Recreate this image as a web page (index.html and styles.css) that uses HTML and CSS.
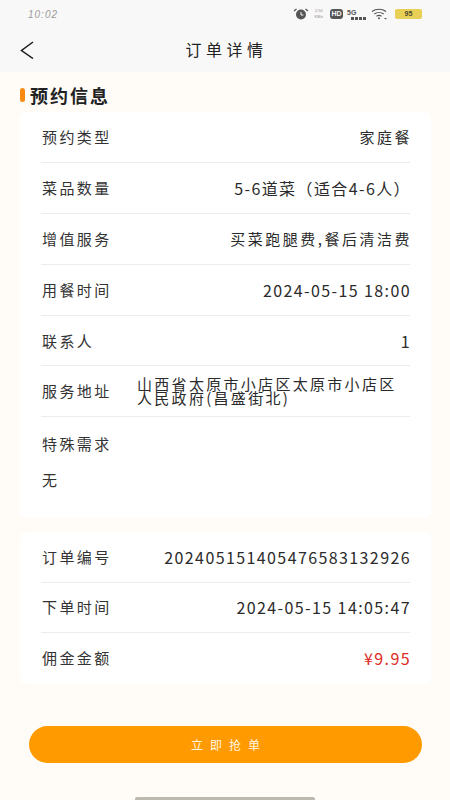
FILE: index.html
```html
<!DOCTYPE html>
<html lang="zh-CN">
<head>
<meta charset="utf-8">
<title>订单详情</title>
<link rel="stylesheet" href="styles.css">
</head>
<body>
<div class="page">
  <header class="top">
    <div class="status">
      <span class="time">10:02</span>
      <div class="status-icons">
        <svg class="ic-alarm" viewBox="0 0 16 12" width="16" height="12"><circle cx="8" cy="6.5" r="5" fill="#555"/><path d="M8 4v3h2.4" fill="none" stroke="#f8f8f8" stroke-width="1"/><path d="M1 3 3.5 1M15 3 12.500 1" stroke="#555" stroke-width="1.300"/></svg>
        <span class="speed"><span>2.50</span><span>KB/s</span></span>
        <span class="hd">HD</span>
        <span class="signal"><span class="sg">5G</span><span class="bars"><i></i><i></i><i></i><i></i></span></span>
        <svg class="ic-wifi" viewBox="0 0 16 12" width="16" height="12"><path d="M1 3.500C5 .5 11 .5 15 3.500M3.300 6C6 4 10 4 12.700 6M5.500 8.300C7 7.300 9 7.300 10.500 8.300" fill="none" stroke="#555" stroke-width="1.200"/><circle cx="8" cy="10.300" r="1" fill="#555"/><path d="M13 10h3l-1.500 1.500z" fill="#555"/></svg>
        <span class="battery">95</span>
      </div>
    </div>
    <div class="nav">
      <svg class="back" viewBox="0 0 14 18" width="14" height="18"><path d="M13 1 1.500 9.500 13 17.500" fill="none" stroke="#1a1a1a" stroke-width="1.500"/></svg>
      <h1 class="nav-title">订单详情</h1>
    </div>
  </header>

  <main class="content">
    <h2 class="section-title">预约信息</h2>
    <section class="card">
      <div class="row"><span class="label">预约类型</span><span class="value value-cjk">家庭餐</span></div>
      <div class="row"><span class="label">菜品数量</span><span class="value">5-6道菜（适合4-6人）</span></div>
      <div class="row"><span class="label">增值服务</span><span class="value value-cjk">买菜跑腿费,餐后清洁费</span></div>
      <div class="row"><span class="label">用餐时间</span><span class="value">2024-05-15 18:00</span></div>
      <div class="row"><span class="label">联系人</span><span class="value">1</span></div>
      <div class="row"><span class="label">服务地址</span><span class="value address">山西省太原市小店区太原市小店区人民政府(昌盛街北)</span></div>
      <div class="block">
        <span class="label">特殊需求</span>
        <span class="label">无</span>
      </div>
    </section>
    <section class="card card-order">
      <div class="row"><span class="label">订单编号</span><span class="value">202405151405476583132926</span></div>
      <div class="row"><span class="label">下单时间</span><span class="value">2024-05-15 14:05:47</span></div>
      <div class="row"><span class="label">佣金金额</span><span class="value price">¥9.95</span></div>
    </section>
    <button class="grab" type="button">立即抢单</button>
  </main>
  <div class="home-bar"></div>
</div>
</body>
</html>
```

FILE: styles.css
```css
* { box-sizing: border-box; }
html, body { margin: 0; padding: 0; }
body {
  width: 450px;
  height: 800px;
  overflow: hidden;
  font-family: "Noto Sans CJK SC", "Liberation Sans", sans-serif;
  background: #fffcf8;
  color: #2b2b2b;
}
.page {
  height: 800px;
  display: flex;
  flex-direction: column;
}
.top {
  height: 72px;
  background: #f8f8f8;
  flex: none;
}
.status {
  height: 28px;
  display: flex;
  align-items: center;
  justify-content: space-between;
  padding: 0 28px 0 28px;
}
.time {
  font: italic 300 10px "Liberation Sans", sans-serif;
  letter-spacing: 1px;
  color: #9a9a9a;
}
.status-icons {
  display: flex;
  align-items: center;
  gap: 6px;
}
.speed {
  display: flex;
  flex-direction: column;
  align-items: center;
  margin-right: 1px;
  font: 4px/6px "Liberation Sans", sans-serif;
  color: #888;
}
.hd {
  width: 13px;
  height: 10px;
  margin-right: -2px;
  border-radius: 3px;
  background: #555;
  color: #f8f8f8;
  font: bold 7px/10px "Liberation Sans", sans-serif;
  text-align: center;
}
.signal {
  display: flex;
  flex-direction: column;
  width: 19px;
}
.sg {
  font: bold 7px/7px "Liberation Sans", sans-serif;
  color: #555;
}
.bars {
  display: flex;
  justify-content: flex-end;
  gap: 1px;
  margin-top: 1px;
}
.bars i {
  width: 3px;
  height: 3px;
  background: #555;
}
.ic-wifi {
  margin: 0 2px 0 -1px;
}
.battery {
  width: 27px;
  height: 10px;
  border-radius: 2px;
  background: #e8cf55;
  color: #4a4a30;
  font: bold 7px/10px "Liberation Sans", sans-serif;
  text-align: center;
}
.nav {
  height: 44px;
  display: flex;
  align-items: center;
  justify-content: center;
  position: relative;
}
.back {
  position: absolute;
  left: 20px;
  top: 13px;
}
.nav-title {
  margin: -2px 0 0 3px;
  font-size: 16px;
  font-weight: 400;
  letter-spacing: 4.500px;
  line-height: 44px;
  color: #222;
}
.content {
  flex: 1;
  display: flex;
  flex-direction: column;
  min-height: 0;
}
.section-title {
  margin: 12px 0 5px 20px;
  padding-left: 10px;
  height: 23px;
  font-size: 18px;
  line-height: 23px;
  font-weight: 700;
  letter-spacing: 2px;
  color: #222;
  position: relative;
}
.section-title::before {
  content: "";
  position: absolute;
  left: 0;
  top: 4px;
  width: 5px;
  height: 14px;
  border-radius: 2.500px;
  background: #f98a10;
}
.card {
  margin: 0 19px 0 20px;
  padding: 0 21px;
  background: #fff;
  border-radius: 6px;
}
.card-order {
  margin-top: 14px;
}
.row {
  height: 50.900px;
  display: flex;
  align-items: center;
  justify-content: space-between;
  border-bottom: 1px solid #ececec;
}
.card-order .row {
  height: 50.600px;
}
.card-order .row:last-child {
  border-bottom: 0;
}
.label {
  flex: none;
  font-size: 15px;
  letter-spacing: 2.400px;
  color: #333;
  line-height: 20px;
  margin-left: 1px;
}
.value {
  text-align: right;
  color: #2b2b2b;
  font-size: 16px;
  letter-spacing: 1.400px;
  line-height: 20px;
  margin-right: -1px;
}
.value-cjk {
  font-size: 15px;
  letter-spacing: 2.500px;
  margin-right: -2px;
}
.address {
  flex: none;
  width: 266px;
  margin-right: 7px;
  text-align: left;
  font-size: 15px;
  letter-spacing: 2.300px;
  line-height: 14px;
}
.price {
  color: #e02a24;
}
.block {
  height: 100.600px;
  padding-top: 17px;
  display: flex;
  flex-direction: column;
  gap: 16px;
}
.grab {
  display: block;
  margin: 42px 28px 0 29px;
  height: 37px;
  flex: none;
  border: 0;
  border-radius: 19px;
  background: #ff9a00;
  color: #fff6e4;
  font-family: inherit;
  font-size: 12px;
  letter-spacing: 7px;
  padding: 0 0 0 7px;
}
.home-bar {
  flex: none;
  width: 180px;
  height: 3px;
  margin: auto auto 0;
  background: #bdb9ae;
  border-radius: 2px 2px 0 0;
}
```
